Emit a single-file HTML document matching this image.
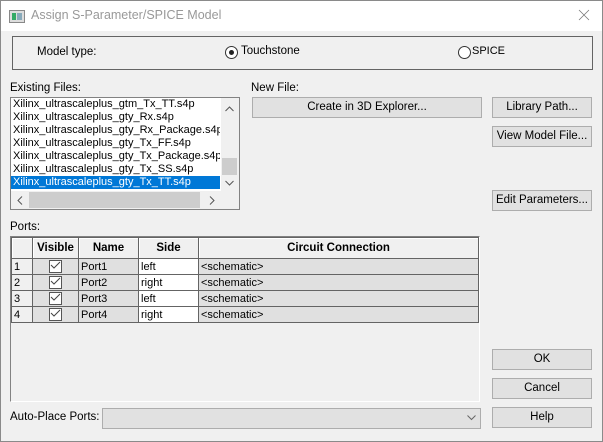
<!DOCTYPE html>
<html><head><style>
*{box-sizing:border-box;margin:0;padding:0}
body{width:603px;height:442px;overflow:hidden;background:#f0f0f0;font-family:"Liberation Sans",Tahoma,sans-serif;font-size:11px;color:#000;position:relative}
.a{position:absolute}
.win{left:0;top:0;width:603px;height:442px;border:1px solid #8a8a8a}
.title{left:1px;top:1px;width:601px;height:30px;background:#fff}
.btn{position:absolute;background:#e1e1e1;border:1px solid #adadad;text-align:center;line-height:19px;font-size:11.5px}
.row{position:absolute;left:0;height:13px;line-height:13px;white-space:nowrap;font-size:11px;padding-left:2px;width:209px;overflow:hidden}
table{border-collapse:collapse;position:absolute;left:11px;top:237px}
td{border:1px solid #646464;height:16px;padding:0 2px;font-size:11px}
th{border:1px solid #646464;height:21px;font-size:11.5px;background:#f0f0f0;box-shadow:inset 1px 1px 0 #fff;font-weight:bold}
.cb{display:inline-block;width:13px;height:13px;border:1px solid #555;background:#fff;vertical-align:middle;position:relative}
.rad{position:absolute;width:13px;height:13px;border:1px solid #333;border-radius:50%;background:#fff}
</style></head><body>
<div class="a win"></div>
<div class="a title"></div>
<svg class="a" style="left:9px;top:10px" width="16" height="13"><rect x="0.5" y="0.5" width="15" height="12" fill="#ddd" stroke="#888"/><rect x="3" y="3" width="4" height="7" fill="#3a6"/><rect x="8" y="3" width="5" height="7" fill="#8ab"/></svg>
<div class="a" style="left:31px;top:8px;font-size:12.5px;color:#999">Assign S-Parameter/SPICE Model</div>
<svg class="a" style="left:578px;top:9px" width="12" height="12"><path d="M1 1L11 11M11 1L1 11" stroke="#777" stroke-width="0.8"/></svg>

<div class="a" style="left:12px;top:36px;width:581px;height:34px;border:1px solid #646464"></div>
<div class="a" style="left:37px;top:46px;font-size:11.5px">Model type:</div>
<div class="rad" style="left:225px;top:46px"><div class="a" style="left:3px;top:3px;width:5px;height:5px;border-radius:50%;background:#222"></div></div>
<div class="a" style="left:241px;top:45px;font-size:11.5px">Touchstone</div>
<div class="rad" style="left:458px;top:46px"></div>
<div class="a" style="left:472px;top:45px;font-size:11px">SPICE</div>

<div class="a" style="left:10px;top:82px;font-size:11.5px">Existing Files:</div>
<div class="a" style="left:10px;top:97px;width:230px;height:113px;border:1px solid #828282;background:#fff">
 <div class="row" style="top:0">Xilinx_ultrascaleplus_gtm_Tx_TT.s4p</div>
 <div class="row" style="top:13px">Xilinx_ultrascaleplus_gty_Rx.s4p</div>
 <div class="row" style="top:26px">Xilinx_ultrascaleplus_gty_Rx_Package.s4p</div>
 <div class="row" style="top:39px">Xilinx_ultrascaleplus_gty_Tx_FF.s4p</div>
 <div class="row" style="top:52px">Xilinx_ultrascaleplus_gty_Tx_Package.s4p</div>
 <div class="row" style="top:65px">Xilinx_ultrascaleplus_gty_Tx_SS.s4p</div>
 <div class="row" style="top:78px;background:#0078d7;color:#fff">Xilinx_ultrascaleplus_gty_Tx_TT.s4p</div>
 <div class="a" style="left:210px;top:0;width:18px;height:93px;background:#f0f0f0"></div>
 <div class="a" style="left:211px;top:60px;width:15px;height:17px;background:#cdcdcd"></div>
 <svg class="a" style="left:214px;top:8px" width="9" height="6"><path d="M0.5 5L4.5 1L8.5 5" fill="none" stroke="#555"/></svg>
 <svg class="a" style="left:214px;top:82px" width="9" height="6"><path d="M0.5 1L4.5 5L8.5 1" fill="none" stroke="#555"/></svg>
 <div class="a" style="left:0;top:93px;width:210px;height:18px;background:#f0f0f0"></div>
 <div class="a" style="left:18px;top:94px;width:171px;height:16px;background:#cdcdcd"></div>
 <svg class="a" style="left:6px;top:98px" width="6" height="9"><path d="M5 0.5L1 4.5L5 8.5" fill="none" stroke="#555"/></svg>
 <svg class="a" style="left:198px;top:98px" width="6" height="9"><path d="M1 0.5L5 4.5L1 8.5" fill="none" stroke="#555"/></svg>
 <div class="a" style="left:210px;top:93px;width:18px;height:18px;background:#f0f0f0"></div>
</div>

<div class="a" style="left:251px;top:82px;font-size:11.5px">New File:</div>
<div class="btn" style="left:252px;top:97px;width:230px;height:21px">Create in 3D Explorer...</div>
<div class="btn" style="left:492px;top:97px;width:100px;height:21px">Library Path...</div>
<div class="btn" style="left:492px;top:126px;width:100px;height:21px">View Model File...</div>
<div class="btn" style="left:492px;top:190px;width:100px;height:21px">Edit Parameters...</div>

<div class="a" style="left:10px;top:221px;font-size:11.5px">Ports:</div>
<div class="a" style="left:10px;top:236px;width:470px;height:166px;border-left:1px solid #828282;border-top:1px solid #828282;border-right:1px solid #fff;border-bottom:1px solid #fff"></div>
<table>
<tr><th style="width:21px"></th><th style="width:46px">Visible</th><th style="width:60px">Name</th><th style="width:60px">Side</th><th style="width:280px">Circuit Connection</th></tr>
<tr><td style="background:#f0f0f0">1</td><td style="text-align:center;background:#e0e0e0"><span class="cb"></span></td><td style="background:#e0e0e0">Port1</td><td style="background:#fff">left</td><td style="background:#e0e0e0">&lt;schematic&gt;</td></tr>
<tr><td style="background:#f0f0f0">2</td><td style="text-align:center;background:#e0e0e0"><span class="cb"></span></td><td style="background:#e0e0e0">Port2</td><td style="background:#fff">right</td><td style="background:#e0e0e0">&lt;schematic&gt;</td></tr>
<tr><td style="background:#f0f0f0">3</td><td style="text-align:center;background:#e0e0e0"><span class="cb"></span></td><td style="background:#e0e0e0">Port3</td><td style="background:#fff">left</td><td style="background:#e0e0e0">&lt;schematic&gt;</td></tr>
<tr><td style="background:#f0f0f0">4</td><td style="text-align:center;background:#e0e0e0"><span class="cb"></span></td><td style="background:#e0e0e0">Port4</td><td style="background:#fff">right</td><td style="background:#e0e0e0">&lt;schematic&gt;</td></tr>
</table>
<svg class="a" style="left:0;top:0" width="603" height="442">
<g fill="none" stroke="#444" stroke-width="1">
<path d="M51 265l3 3l6-6"/><path d="M51 281l3 3l6-6"/><path d="M51 297l3 3l6-6"/><path d="M51 313l3 3l6-6"/>
</g></svg>

<div class="a" style="left:10px;top:411px;font-size:11.5px">Auto-Place Ports:</div>
<div class="a" style="left:102px;top:408px;width:379px;height:21px;background:#e1e1e1;border:1px solid #adadad"></div>
<svg class="a" style="left:467px;top:415px" width="9" height="6"><path d="M0.5 0.5L4.5 4.5L8.5 0.5" fill="none" stroke="#666"/></svg>

<div class="btn" style="left:492px;top:349px;width:100px;height:21px">OK</div>
<div class="btn" style="left:492px;top:378px;width:100px;height:21px">Cancel</div>
<div class="btn" style="left:492px;top:407px;width:100px;height:21px">Help</div>
</body></html>
